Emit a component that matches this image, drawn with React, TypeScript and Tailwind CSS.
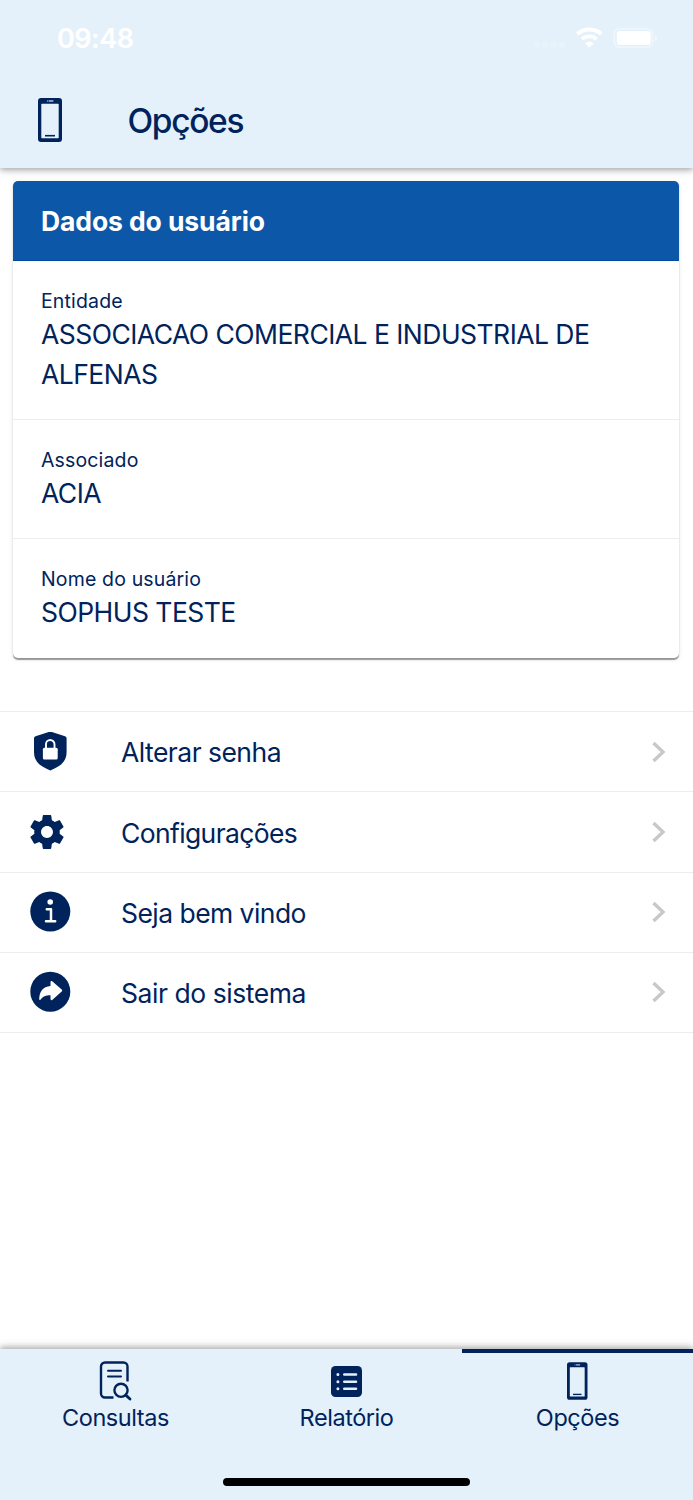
import React, { useState } from 'react';

const PhoneIcon = ({ className }: { className?: string }) => (
    <svg viewBox="0 0 24 44" className={className} fill="none">
        <rect width="24" height="44" rx="3" fill="currentColor" />
        <rect x="3.3" y="5.8" width="17.4" height="34.4" rx="0.6" fill="#e4f1fb" />
        <path d="M9 3h.8M10.6 3h4.8" stroke="#e4f1fb" strokeOpacity="0.75" strokeWidth="1.5" />
        <path d="M7 37.7h10" stroke="currentColor" strokeWidth="1.6" />
    </svg>
);

const ShieldLockIcon = () => (
    <svg viewBox="0 1 40 40" className="size-10" fill="none">
        <path
            d="M20.3.5 35 5.200Q36.600 5.800 36.600 7.400V21C36.600 30.500 31 35 20.300 39.500 9.600 35 4 30.500 4 21V7.400Q4 5.800 5.600 5.200Z"
            fill="currentColor"
        />
        <rect x="12.9" y="16.8" width="14.8" height="11.8" rx="1.5" fill="#fff" />
        <path d="M16 17.500V13.300a4.250 4.250 0 0 1 8.500 0v4.200" stroke="#fff" strokeWidth="1.9" />
    </svg>
);

const GearIcon = () => (
    <svg viewBox="2.25 2 19.5 20" className="mr-[6px] size-[34px]" fill="currentColor">
        <path d="M19.43 12.98c.04-.32.07-.64.07-.98s-.03-.66-.07-.98l2.11-1.65c.19-.15.24-.42.12-.64l-2-3.46c-.12-.22-.39-.3-.61-.22l-2.49 1c-.52-.4-1.08-.73-1.69-.98l-.38-2.65A.488.488 0 0 0 14 2h-4c-.25 0-.46.18-.49.42l-.38 2.65c-.61.25-1.17.59-1.69.98l-2.49-1c-.23-.09-.49 0-.61.22l-2 3.46c-.13.22-.07.49.12.64l2.11 1.65c-.04.32-.07.65-.07.98s.03.66.07.98l-2.11 1.65c-.19.15-.24.42-.12.64l2 3.46c.12.22.39.3.61.22l2.49-1c.52.4 1.08.73 1.69.98l.38 2.65c.03.24.24.42.49.42h4c.25 0 .46-.18.49-.42l.38-2.65c.61-.25 1.17-.59 1.69-.98l2.49 1c.23.09.49 0 .61-.22l2-3.46c.12-.22.07-.49-.12-.64l-2.11-1.65zM12 15.5c-1.93 0-3.5-1.57-3.5-3.5s1.57-3.5 3.5-3.5 3.5 1.57 3.5 3.5-1.57 3.5-3.5 3.5z" />
    </svg>
);

const InfoIcon = () => (
    <svg viewBox="0 0 40 40" className="size-10 overflow-visible" fill="none">
        <circle cx="20.3" cy="19.5" r="20" fill="currentColor" />
        <circle cx="20.2" cy="10" r="2.8" fill="#fff" />
        <path d="M16.8 17.2h4.2v12M16 29.3h9.2" stroke="#fff" strokeWidth="2.5" strokeLinecap="round" strokeLinejoin="round" />
    </svg>
);

const ForwardIcon = () => (
    <svg viewBox="0 0 40 40" className="size-10 overflow-visible" fill="none">
        <circle cx="20.3" cy="19.7" r="20" fill="currentColor" />
        <path
            d="M20.5 10v4C12.7 14.6 9.4 19.8 9.2 27.2c0 .9 1 1 1.5.3 2.2-3.3 5-4.3 9.8-4.3v3.9c0 1 1 1.4 1.7.8l9.5-8.3c.7-.6.7-1.4 0-2L22.2 9.3c-.7-.6-1.7-.3-1.7.7z"
            fill="#fff"
        />
    </svg>
);

const SearchDocIcon = () => (
    <svg viewBox="0.5 0 32 40" className="h-10 w-8 overflow-visible" fill="none" stroke="currentColor" strokeWidth="2.4">
        <path d="M28 20.5V5.500a4 4 0 0 0-4-4H5.500a4 4 0 0 0-4 4v27a4 4 0 0 0 4 4H14" />
        <path d="M8.500 9.700H21.500M8.500 15.500H21.500" strokeWidth="2" strokeLinecap="round" />
        <circle cx="21.5" cy="29.3" r="6.6" />
        <path d="m26.300 34.100 4.200 3.900" strokeWidth="2.8" strokeLinecap="round" />
    </svg>
);

const ListIcon = () => (
    <svg viewBox="0 0 31 31" className="size-[31px]" fill="none">
        <rect width="31" height="31" rx="4.5" fill="currentColor" />
        <path d="M13.3 8.5H25M13.3 15.7H25M13.3 22.8H25" stroke="#e4f1fb" strokeWidth="2.6" strokeLinecap="round" />
        <path d="M6.9 8.5h.01M6.9 15.7h.01M6.9 22.8h.01" stroke="#e4f1fb" strokeWidth="3" strokeLinecap="round" />
    </svg>
);

const StatusIcons = () => (
    <svg viewBox="0 0 124 24" className="h-6 w-[124px]" fill="none">
        <g fill="#e7f5fb">
            <circle cx="3.8" cy="18.7" r="3" />
            <circle cx="12" cy="18.7" r="3" />
            <circle cx="20.8" cy="18.7" r="3" />
            <circle cx="29" cy="18.7" r="3" />
        </g>
        <path d="M44.3 8a18 18 0 0 1 24 0" stroke="#fff" strokeWidth="4" />
        <path d="M49 13.100a11 11 0 0 1 14.600 0" stroke="#fff" strokeWidth="3.6" />
        <path d="M52 17.400a6 6 0 0 1 8.600 0l-4.300 4.200z" fill="#fff" />
        <rect x="81.3" y="2.8" width="38.4" height="18.4" rx="5" stroke="#eff7fd" strokeWidth="1.6" />
        <rect x="83.8" y="5" width="34" height="14" rx="3" fill="#fff" />
        <path d="M122.200 9v6c2.200-1 2.200-5 0-6z" fill="#f2f9fe" />
    </svg>
);

const userData = [
    { label: "Entidade", value: "ASSOCIACAO COMERCIAL E INDUSTRIAL DE ALFENAS", height: "h-[159px]" },
    { label: "Associado", value: "ACIA", height: "h-[119px]" },
    { label: "Nome do usuário", value: "SOPHUS TESTE", height: "h-[118px]" },
];

const options = [
    { label: "Alterar senha", icon: <ShieldLockIcon />, tracking: "tracking-[-0.53px]" },
    { label: "Configurações", icon: <GearIcon />, tracking: "tracking-[-0.63px]" },
    { label: "Seja bem vindo", icon: <InfoIcon />, tracking: "tracking-[-0.55px]" },
    { label: "Sair do sistema", icon: <ForwardIcon />, tracking: "tracking-[-0.45px]" },
];

const tabs = [
    { label: "Consultas", icon: <SearchDocIcon /> },
    { label: "Relatório", icon: <ListIcon /> },
    { label: "Opções", icon: <PhoneIcon className="h-[38px] w-[20.5px]" /> },
];

export default function App() {
    const [activeTab, setActiveTab] = useState("Opções");

    return (
        <div className="flex h-[1500px] w-[693px] flex-col overflow-hidden bg-white font-['Inter',sans-serif] text-[#00235b]">
            <header className="z-10 h-[167.5px] shrink-0 bg-[#e4f1fb] shadow-[0_2px_5px_rgba(0,0,0,0.24),0_3px_9px_rgba(0,0,0,0.12)]">
                {/* Status bar */}
                <div className="flex h-[76px] items-center justify-between pr-[36px] pl-[57px] text-white">
                    <span className="pt-[2px] text-[27px] font-semibold tracking-[-0.5px]">09:48</span>
                    <StatusIcons />
                </div>
                <div className="flex h-[88px] items-center pl-[38px]">
                    <PhoneIcon className="h-11 w-6" />
                    <h1 className="ml-[65.5px] pt-[2px] text-[33.5px] font-medium tracking-[-1.35px]">Opções</h1>
                </div>
            </header>

            <main className="flex-1">
                <section className="mt-[13.5px] mr-[14px] ml-[13px] h-[476.5px] overflow-hidden rounded-[5px] bg-white shadow-[0_1.5px_1px_rgba(0,0,0,0.38),0_1px_5px_rgba(0,0,0,0.1)]">
                    <h2 className="flex h-20 items-center border-b border-[#004a9c] bg-[#0d57a8] pt-[3px] pl-[28px] text-[26.5px] font-bold tracking-[-0.1px] text-white">
                        Dados do usuário
                    </h2>
                    <div className="divide-y divide-[#ededed]">
                        {userData.map((item) => (
                            <div key={item.label} className={`px-7 pt-[27px] ${item.height}`}>
                                <p className="text-[19.5px] leading-[26px] tracking-[0.15px]">{item.label}</p>
                                <p className="text-[26.5px] leading-10 tracking-[-0.53px]">{item.value}</p>
                            </div>
                        ))}
                    </div>
                </section>

                <nav className="mt-[53.5px] border-t border-[#ededed]">
                    {options.map((option) => (
                        <button
                            key={option.label}
                            className="flex h-[80.25px] w-full items-center border-b border-[#ededed] pr-[27px] pl-[30px] text-left"
                        >
                            {option.icon}
                            <span className={`ml-[51px] flex-1 pt-[3px] text-[26.5px] ${option.tracking}`}>{option.label}</span>
                            <svg viewBox="0 0 14 22" className="h-[22px] w-[14px]" fill="none" stroke="#c8c8c8" strokeWidth="3.4">
                                <path d="m1.5 2 9.5 9-9.500 9" />
                            </svg>
                        </button>
                    ))}
                </nav>
            </main>

            <footer className="z-10 flex h-[151px] shrink-0 flex-col bg-[#e4f1fb] shadow-[0_-2px_5px_rgba(0,0,0,0.22),0_-3px_9px_rgba(0,0,0,0.12)]">
                <div className="grid h-[129px] grid-cols-3">
                    {tabs.map((tab) => (
                        <button
                            key={tab.label}
                            onClick={() => setActiveTab(tab.label)}
                            className={`flex flex-col items-center border-t-4 pt-2 ${activeTab === tab.label ? 'border-[#00235b]' : 'border-transparent'}`}
                        >
                            <span className="flex h-10 items-center">{tab.icon}</span>
                            <span className="text-[23.5px] leading-[34px] tracking-[-0.45px]">{tab.label}</span>
                        </button>
                    ))}
                </div>
                {/* Home indicator */}
                <div className="mx-auto h-2 w-[247px] rounded-full bg-black" />
            </footer>
        </div>
    );
}
